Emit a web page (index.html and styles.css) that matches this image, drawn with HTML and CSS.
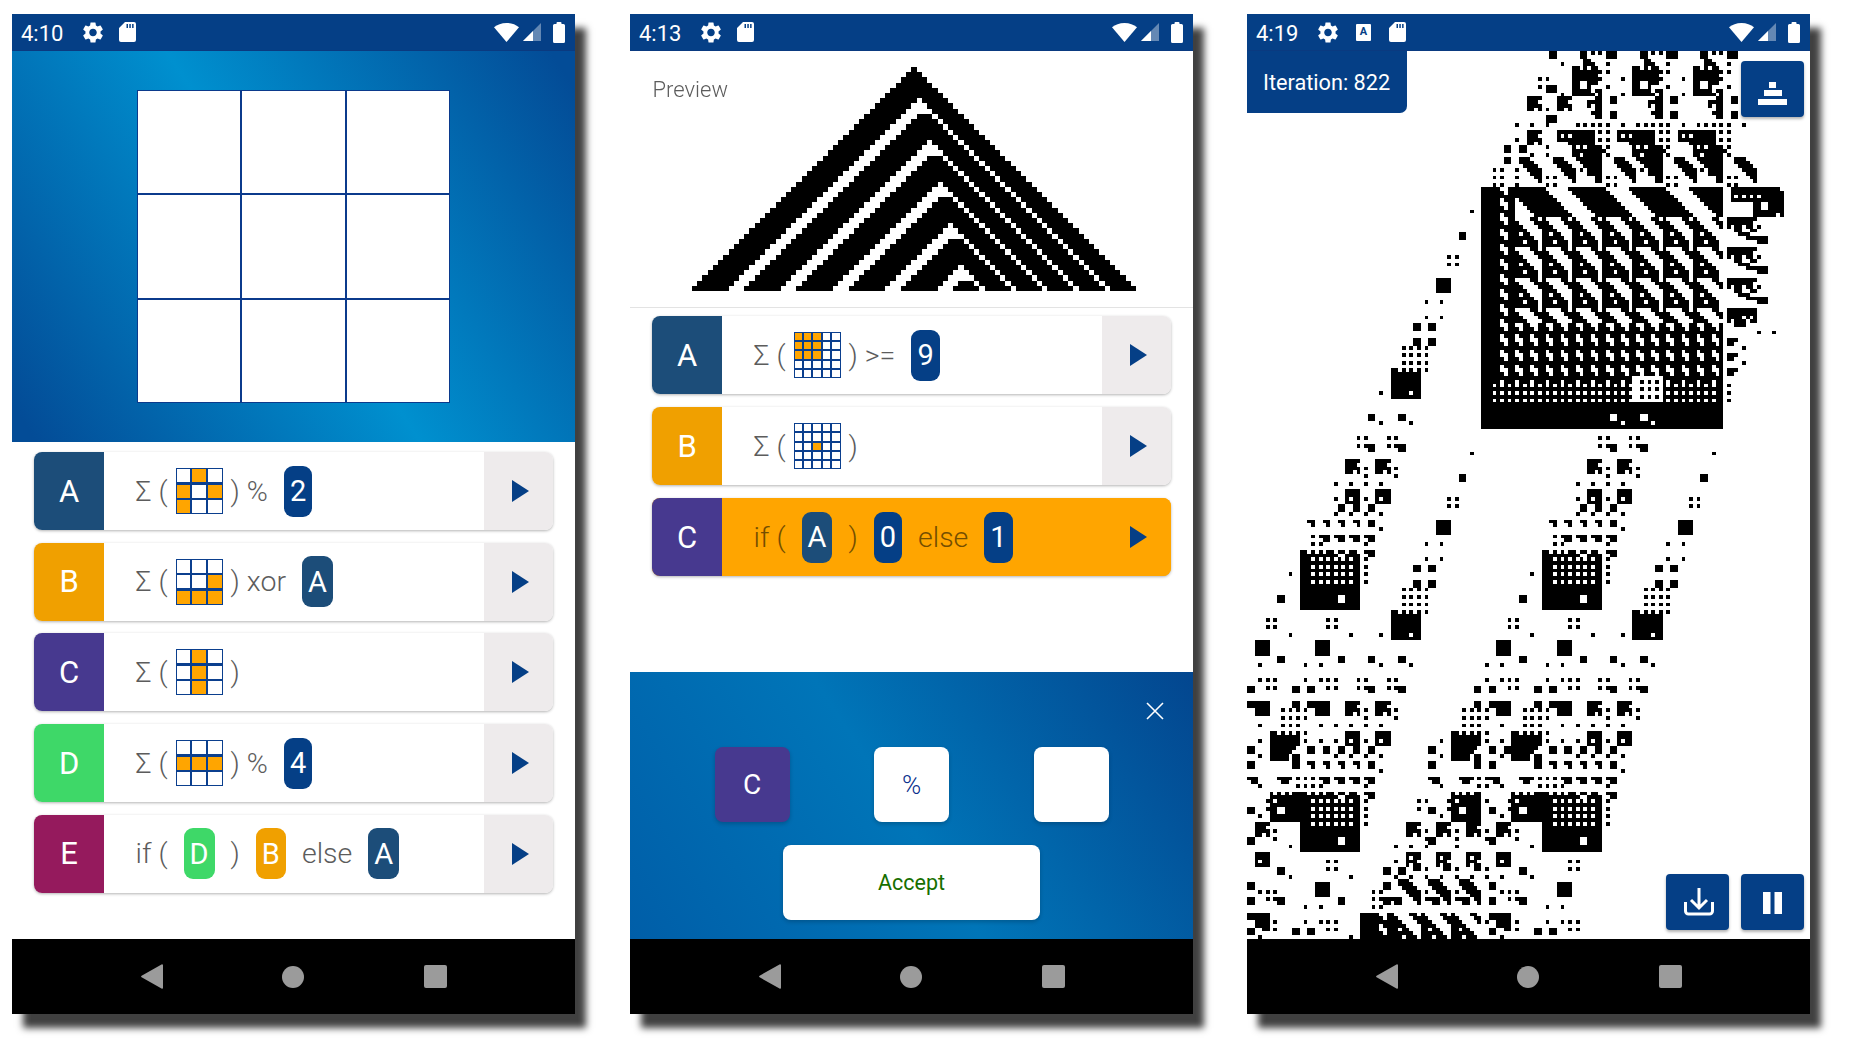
FILE: index.html
```html
<!DOCTYPE html>
<html lang="en">
<head>
<meta charset="utf-8">
<title>Automaton screens</title>
<link rel="stylesheet" href="styles.css">
</head>
<body>
<svg class="defs" aria-hidden="true">
  <symbol id="gear" viewBox="2.5 2 19 20"><path d="M19.14 12.94c.04-.3.06-.61.06-.94 0-.32-.02-.64-.07-.94l2.03-1.58a.49.49 0 0 0 .12-.61l-1.92-3.32a.488.488 0 0 0-.59-.22l-2.39.96c-.5-.38-1.03-.7-1.62-.94l-.36-2.54a.484.484 0 0 0-.48-.41h-3.84c-.24 0-.43.17-.47.41l-.36 2.54c-.59.24-1.13.57-1.62.94l-2.39-.96c-.22-.08-.47 0-.59.22L2.74 8.87c-.12.21-.08.47.12.61l2.03 1.58c-.05.3-.09.63-.09.94s.02.64.07.94l-2.03 1.58a.49.49 0 0 0-.12.61l1.92 3.32c.12.22.37.29.59.22l2.39-.96c.5.38 1.03.7 1.62.94l.36 2.54c.05.24.24.41.48.41h3.84c.24 0 .44-.17.47-.41l.36-2.54c.59-.24 1.13-.56 1.62-.94l2.39.96c.22.08.47 0 .59-.22l1.92-3.32c.12-.22.07-.47-.12-.61l-2.01-1.58zM12 15.6c-1.98 0-3.6-1.62-3.6-3.6s1.62-3.6 3.6-3.6 3.6 1.62 3.6 3.6-1.62 3.6-3.6 3.6z" fill="#fff"/></symbol>
  <symbol id="sd" viewBox="0 0 17 20"><path fill-rule="evenodd" d="M6 0H15a2 2 0 0 1 2 2V18a2 2 0 0 1-2 2H2a2 2 0 0 1-2-2V6zM7.500 2v4h1.500V2zM10.300 2v4h1.500V2zM13.100 2v4h1.500V2z" fill="#fff"/></symbol>
  <symbol id="wifi" viewBox="0 0 25 19"><path d="M12.500 19 0 4.300C3.200 1.700 7.500 0 12.500 0S21.800 1.700 25 4.300z" fill="#fff"/></symbol>
  <symbol id="signal" viewBox="0 0 18 18"><path d="M18 0V18H0z" fill="#fff" fill-opacity=".38"/><path d="M10 8V18H0z" fill="#fff"/></symbol>
  <symbol id="battery" viewBox="0 0 12 21"><path d="M3.500 2V1a1 1 0 0 1 1-1h3a1 1 0 0 1 1 1v1h2a1.500 1.500 0 0 1 1.500 1.500v16a1.500 1.500 0 0 1-1.500 1.500h-9A1.500 1.500 0 0 1 0 19.500v-16A1.500 1.500 0 0 1 1.500 2z" fill="#fff"/></symbol>
  <symbol id="play" viewBox="0 0 17 22"><path d="M0 0 17 11 0 22z" fill="#053f86"/></symbol>
</svg>

<main class="screens">

  <section class="phone">
    <header class="status">
      <span class="time">4:10</span>
      <svg class="ic-gear"><use href="#gear"/></svg>
      <svg class="ic-sd"><use href="#sd"/></svg>
      <span class="status-right">
        <svg class="ic-wifi"><use href="#wifi"/></svg>
        <svg class="ic-signal"><use href="#signal"/></svg>
        <svg class="ic-battery"><use href="#battery"/></svg>
      </span>
    </header>
    <div class="content">
      <div class="hero">
        <div class="board">
          <i></i><i></i><i></i><i></i><i></i><i></i><i></i><i></i><i></i>
        </div>
      </div>
      <div class="cards cards-first">
        <article class="card">
          <span class="letter c-a">A</span>
          <div class="formula">
            <span class="sum">Σ ( <span class="mini"><i></i><i class="on"></i><i></i><i class="on"></i><i></i><i class="on"></i><i class="on"></i><i></i><i></i></span> ) %</span>
            <span class="chip c-num">2</span>
          </div>
          <span class="run"><svg class="ic-play"><use href="#play"/></svg></span>
        </article>
        <article class="card">
          <span class="letter c-b">B</span>
          <div class="formula">
            <span class="sum">Σ ( <span class="mini"><i></i><i></i><i></i><i></i><i></i><i class="on"></i><i class="on"></i><i class="on"></i><i class="on"></i></span> ) xor</span>
            <span class="chip c-a">A</span>
          </div>
          <span class="run"><svg class="ic-play"><use href="#play"/></svg></span>
        </article>
        <article class="card">
          <span class="letter c-c">C</span>
          <div class="formula">
            <span class="sum">Σ ( <span class="mini"><i></i><i class="on"></i><i></i><i></i><i class="on"></i><i></i><i></i><i class="on"></i><i></i></span> )</span>
          </div>
          <span class="run"><svg class="ic-play"><use href="#play"/></svg></span>
        </article>
        <article class="card">
          <span class="letter c-d">D</span>
          <div class="formula">
            <span class="sum">Σ ( <span class="mini"><i></i><i></i><i></i><i class="on"></i><i class="on"></i><i class="on"></i><i></i><i></i><i></i></span> ) %</span>
            <span class="chip c-num">4</span>
          </div>
          <span class="run"><svg class="ic-play"><use href="#play"/></svg></span>
        </article>
        <article class="card">
          <span class="letter c-e">E</span>
          <div class="formula">
            <span>if (</span>
            <span class="chip c-d">D</span>
            <span>)</span>
            <span class="chip c-b">B</span>
            <span>else</span>
            <span class="chip c-a">A</span>
          </div>
          <span class="run"><svg class="ic-play"><use href="#play"/></svg></span>
        </article>
      </div>
    </div>
    <nav class="nav">
      <svg class="nav-back" viewBox="0 0 22 25"><path d="M21 .3a1 1 0 0 1 1 1V23.700a1 1 0 0 1-1.500.8L.6 13.300a1 1 0 0 1 0-1.600L20.500.4z" fill="#9b9b9b"/></svg>
      <span class="nav-home"></span>
      <span class="nav-square"></span>
    </nav>
  </section>

  <section class="phone">
    <header class="status">
      <span class="time">4:13</span>
      <svg class="ic-gear"><use href="#gear"/></svg>
      <svg class="ic-sd"><use href="#sd"/></svg>
      <span class="status-right">
        <svg class="ic-wifi"><use href="#wifi"/></svg>
        <svg class="ic-signal"><use href="#signal"/></svg>
        <svg class="ic-battery"><use href="#battery"/></svg>
      </span>
    </header>
    <div class="content">
      <div class="preview">
        <span class="preview-label">Preview</span>
        <canvas id="preview" class="preview-canvas" width="85" height="43"></canvas>
      </div>
      <div class="cards cards-second">
        <article class="card">
          <span class="letter c-a">A</span>
          <div class="formula">
            <span class="sum">Σ ( <span class="mini mini5"><i class="on"></i><i class="on"></i><i class="on"></i><i></i><i></i><i class="on"></i><i class="on"></i><i class="on"></i><i></i><i></i><i class="on"></i><i class="on"></i><i class="on"></i><i></i><i></i><i></i><i></i><i></i><i></i><i></i><i></i><i></i><i></i><i></i><i></i></span> ) &gt;=</span>
            <span class="chip c-num">9</span>
          </div>
          <span class="run"><svg class="ic-play"><use href="#play"/></svg></span>
        </article>
        <article class="card">
          <span class="letter c-b">B</span>
          <div class="formula">
            <span class="sum">Σ ( <span class="mini mini5"><i></i><i></i><i></i><i></i><i></i><i></i><i></i><i></i><i></i><i></i><i></i><i></i><i class="on"></i><i></i><i></i><i></i><i></i><i></i><i></i><i></i><i></i><i></i><i></i><i></i><i></i></span> )</span>
          </div>
          <span class="run"><svg class="ic-play"><use href="#play"/></svg></span>
        </article>
        <article class="card card-active">
          <span class="letter c-c">C</span>
          <div class="formula">
            <span>if (</span>
            <span class="chip c-a">A</span>
            <span>)</span>
            <span class="chip c-num">0</span>
            <span>else</span>
            <span class="chip c-num">1</span>
          </div>
          <span class="run"><svg class="ic-play"><use href="#play"/></svg></span>
        </article>
      </div>
      <div class="editor">
        <svg class="close" viewBox="0 0 18 18"><path d="M1 1 17 17M17 1 1 17" stroke="#fff" stroke-width="1.600" fill="none"/></svg>
        <div class="slots">
          <span class="slot slot-c">C</span>
          <span class="slot slot-op">%</span>
          <span class="slot"></span>
        </div>
        <button class="accept" type="button">Accept</button>
      </div>
    </div>
    <nav class="nav">
      <svg class="nav-back" viewBox="0 0 22 25"><path d="M21 .3a1 1 0 0 1 1 1V23.700a1 1 0 0 1-1.500.8L.6 13.300a1 1 0 0 1 0-1.600L20.500.4z" fill="#9b9b9b"/></svg>
      <span class="nav-home"></span>
      <span class="nav-square"></span>
    </nav>
  </section>

  <section class="phone">
    <header class="status">
      <span class="time">4:19</span>
      <svg class="ic-gear"><use href="#gear"/></svg>
      <span class="ic-a">A</span>
      <svg class="ic-sd ic-sd-late"><use href="#sd"/></svg>
      <span class="status-right">
        <svg class="ic-wifi"><use href="#wifi"/></svg>
        <svg class="ic-signal"><use href="#signal"/></svg>
        <svg class="ic-battery"><use href="#battery"/></svg>
      </span>
    </header>
    <div class="content field">
      <canvas id="field" class="field-canvas" width="149" height="235"></canvas>
      <div class="iteration">Iteration: 822</div>
      <button class="fab fab-tower" type="button" aria-label="Layers">
        <svg viewBox="0 0 63 56"><path d="M28 21h7v6h-7zM23 29h18v6H23zM17 38h29v6H17z" fill="#fff"/></svg>
      </button>
      <button class="fab fab-save" type="button" aria-label="Save">
        <svg viewBox="0 0 63 56"><path d="M19.500 28v9a3 3 0 0 0 3 3h21a3 3 0 0 0 3-3v-9M33 14v20M25 26l8 8 8-8" fill="none" stroke="#fff" stroke-width="3"/></svg>
      </button>
      <button class="fab fab-pause" type="button" aria-label="Pause">
        <svg viewBox="0 0 63 56"><path d="M22 18h7.500v22H22zM33.500 18H41v22h-7.500z" fill="#fff"/></svg>
      </button>
    </div>
    <nav class="nav">
      <svg class="nav-back" viewBox="0 0 22 25"><path d="M21 .3a1 1 0 0 1 1 1V23.700a1 1 0 0 1-1.500.8L.6 13.300a1 1 0 0 1 0-1.600L20.500.4z" fill="#9b9b9b"/></svg>
      <span class="nav-home"></span>
      <span class="nav-square"></span>
    </nav>
  </section>

</main>
<script src="script.js"></script>
</body>
</html>
```

FILE: styles.css
```css
* { box-sizing: border-box; }
html, body { margin: 0; height: 100%; background: #fff; overflow: hidden; }
body { font-family: Roboto, "Noto Sans", sans-serif; color: #666; }
.defs { position: absolute; width: 0; height: 0; }

.screens { display: flex; gap: 55px; padding: 14px 0 0 12px; }
.phone {
  width: 563px; height: 1000px; display: flex; flex-direction: column;
  background: #fff; box-shadow: 11px 14px 7px rgba(0,0,0,.75);
}
.phone:last-child { margin-left: -1px; }

/* status bar */
.status {
  height: 37px; flex: none; background: #053f86; color: #fff;
  display: flex; align-items: center; padding: 0 10px 0 9px;
  border-bottom: 1px solid #0a3a80;
}
.time { font-size: 22px; width: 43px; line-height: 1; position: relative; top: 2px; }
.ic-gear { width: 20px; height: 21px; margin-left: 19px; }
.ic-sd { width: 17px; height: 20px; margin-left: 16px; }
.ic-sd-late { margin-left: 18px; }
.ic-a {
  width: 15px; height: 17px; margin-left: 18px; background: #fff; color: #053f86;
  border-radius: 1px; font-size: 11px; font-weight: 700; line-height: 16px; text-align: center;
}
.status-right { margin-left: auto; display: flex; align-items: center; }
.ic-wifi { width: 25px; height: 19px; }
.ic-signal { width: 18px; height: 18px; margin-left: 4px; }
.ic-battery { width: 12px; height: 21px; margin-left: 12px; }

.content { flex: 1; display: flex; flex-direction: column; min-height: 0; }

/* nav bar */
.nav {
  height: 75px; flex: none; background: #000; display: flex;
  align-items: center; justify-content: center; gap: 119.500px;
}
.nav-back { width: 22px; height: 25px; }
.nav-home { width: 22px; height: 22px; border-radius: 50%; background: #9b9b9b; }
.nav-square { width: 23px; height: 23px; border-radius: 2px; background: #9b9b9b; }

/* hero board */
.hero {
  height: 391px; flex: none; display: flex; align-items: center; justify-content: center;
  background: linear-gradient(57deg, #034c97 3%, #0090cf 50%, #034c97 97%);
}
.board {
  width: 313px; height: 313px; display: grid; grid-template: repeat(3, 1fr) / repeat(3, 1fr);
  gap: 2px; padding: 1px; background: #0b3a8c;
}
.board i { background: #fff; }

/* rule cards */
.cards { display: flex; flex-direction: column; padding-left: 21.600px; padding-right: 22px; }
.cards-first { padding-top: 10px; gap: 12.700px; }
.cards-second { padding-top: 8px; gap: 13.200px; }
.card {
  height: 78px; display: flex; border-radius: 8px; overflow: hidden; background: #fff;
  box-shadow: 0 1px 3px rgba(0,0,0,.3);
}
.letter {
  width: 70px; flex: none; display: flex; align-items: center; justify-content: center;
  color: #fff; font-size: 31px; padding-left: 1px;
}
.c-a { background: #1c4d79; }
.c-b { background: #f0a000; }
.c-c { background: #47398f; }
.c-d { background: #3ed868; }
.c-e { background: #951a5d; }
.c-num { background: #053f86; }
.formula {
  flex: 1; display: flex; align-items: center; gap: 16px; padding-left: 32px;
  font-size: 28.500px; font-weight: 300; color: #5c5c5c;
}
.sum { display: inline-flex; align-items: center; gap: 8px; }
.chip {
  height: 51px; padding: 0 6px; border-radius: 9px; display: flex; align-items: center; justify-content: center;
  color: #fff; font-weight: 400; font-size: 29px;
}
.run { width: 69px; flex: none; background: #eeebec; display: flex; align-items: center; justify-content: center; }
.ic-play { width: 17px; height: 22px; margin-left: 3px; }
.card-active { background: #ffa500; }
.card-active .formula { color: #744e00; }
.card-active .run { background: #ffa500; }

.mini {
  width: 47px; height: 46px; display: grid; grid-template: repeat(3, 1fr) / repeat(3, 1fr);
  gap: 2.500px; padding: 1px; background: #0b3f8e;
}
.mini i { background: #fff; }
.mini i.on { background: #ffa500; }
.mini5 { grid-template: repeat(5, 1fr) / repeat(5, 1fr); gap: 2px; }

/* preview */
.preview {
  position: relative; height: 257px; flex: none; padding-top: 16px;
  display: flex; justify-content: center; border-bottom: 1px solid #e3e3e3;
}
.preview-label { position: absolute; left: 22.500px; top: 26px; font-size: 22px; font-weight: 300; color: #5c5c5c; }
.preview-canvas { width: 444px; height: 224px; margin-left: 5px; image-rendering: pixelated; }

/* bottom editor */
.editor {
  position: relative; margin-top: auto; height: 267px; flex: none; padding-top: 75px;
  display: flex; flex-direction: column; align-items: center; gap: 23px;
  background: linear-gradient(57deg, #005ea8 0%, #0075b8 48%, #03468f 100%);
}
.close { position: absolute; left: 516px; top: 30px; width: 18px; height: 18px; }
.slots { display: flex; gap: 84.500px; }
.slot {
  width: 75px; height: 75px; border-radius: 8px; background: #fff; display: flex;
  align-items: center; justify-content: center; box-shadow: 0 2px 4px rgba(0,0,0,.2);
}
.slot-c { background: #47398f; color: #fff; font-size: 28px; }
.slot-op { color: #0a2f8c; font-size: 26px; font-weight: 300; }
.accept {
  width: 257px; height: 75px; border: 0; border-radius: 8px; background: #fff;
  color: #176f00; font: 400 21.500px Roboto, sans-serif; box-shadow: 0 2px 4px rgba(0,0,0,.2);
}

/* automaton field */
.field { position: relative; overflow: hidden; }
.field-canvas { display: block; width: 563px; height: 888px; image-rendering: pixelated; }
.iteration {
  position: absolute; left: 0; top: 0; width: 160px; height: 62px; padding: 20px 0 0 16px;
  background: #053f86; color: #fff; font-size: 21.700px; font-weight: 400; line-height: 24px;
  border-bottom-right-radius: 7px;
}
.fab {
  position: absolute; width: 63px; height: 56px; border: 0; padding: 0; border-radius: 4px;
  background: #053f86; box-shadow: 0 2px 3px rgba(0,0,0,.3);
}
.fab svg { display: block; width: 63px; height: 56px; }
.fab-tower { left: 494px; top: 10px; }
.fab-save { left: 419px; top: 823px; }
.fab-pause { left: 494px; top: 823px; }
```

FILE: script.js
```js
(function () {
  /* ---------- preview triangle ---------- */
  var pc = document.getElementById('preview').getContext('2d');
  for (var r = 0; r < 43; r++) {
    for (var dx = -r; dx <= r; dx++) {
      var white = false;
      for (var k = 0; k < 5; k++) {
        var rk = 6 + 8 * k, d = 1 + 2 * k, t = r - rk;
        if (t < 0) continue;
        if (t < 3) { if (Math.abs(dx - d) <= t) white = true; }
        else if ((dx >= d - t && dx <= d - t + 2) || dx === d + t) white = true;
      }
      if (!white) pc.fillRect(dx + 42, r, 1, 1);
    }
  }

  /* ---------- automaton field ---------- */
  var c = document.getElementById('field').getContext('2d');
  c.fillStyle = '#fff'; c.fillRect(0, 0, 149, 235);
  var ox = 0, oy = 0;
  function R(x, y, w, h) { c.fillStyle = '#000'; c.fillRect(x + ox, y + oy, w, h); }
  function W(x, y, w, h) { c.fillStyle = '#fff'; c.fillRect(x + ox, y + oy, w || 1, h || 1); }
  function D(y, xs) { xs.forEach(function (x) { R(x, y, 1, 1); }); }
  function S(x, y, rows) {
    rows.forEach(function (row, j) {
      for (var i = 0; i < row.length; i++) if (row[i] === '#') R(x + i, y + j, 1, 1);
    });
  }
  function at(list, f) { list.forEach(function (o) { ox = o[0]; oy = o[1]; f(); }); ox = 0; oy = 0; }
  function pick(t, x, y) { return t[((y % t.length) + t.length) % t.length][((x % t[0].length) + t[0].length) % t[0].length] === '#'; }
  function hook(x, y) { R(x, y, 3, 1); R(x + 1, y + 1, 2, 1); }

  var N4 = ['####', '###.', '####', '##.#'];
  var FLAG = ['######', '######', '..####', '..####'];
  var TRI = ['###...', '####..', '.####.', '..####', '...###', '....##', '.....#'];
  var FF = ['####', '#.##', '###.', '#.##', '..##'];
  var A8 = ['##.#.##.', '########', '#######.', '########', '##..###.', '##..#...', '#####.##', '######.#'];
  var C12 = ['#########...', '#.#.######..', '#########...', '...#######..', '....#.#.####', '....#########', '....##.#####', '.....#######', '......######', '.......#####'];
  var K8 = ['##.#.#.#', '########', '########', '########', '#######.', '######..', '#####.##', '#####.##'];
  var K2 = ['#.#.#.##', '########', '#.######', '########', '##..####', '##..####', '########', '########'];
  var T8 = ['....##.#', '#....###', '##....##', '###....#', '#.##...#', '#####..#', '##.###.#', '######.#'];
  var T4 = ['..##', '#.##', '####', '.###'];
  var WW = ['#############.', '##############', '#.#.#.#.######', '##############', '......##..####', '......##..####', '......########', '......######.#'];
  var V8 = ['########', '#######.', '#.##.##.', '..##..##', '...###..', '.....###'];

  /* textured block: cells start black, white cells punched out */
  function texture(x0, y0, w, h, big) {
    R(x0, y0, w, h);
    for (var y = y0; y < y0 + h; y++) {
      for (var x = x0 + 3; x < x0 + w; x++) {
        var rel = y - y0, white = false, tx = x - x0 - 9, v = rel % 8;
        if (rel >= 52) {
          white = (x - x0) % 2 === 1 && rel % 2 === 0 && rel < 58 && x < x0 + 62;
        } else if (x < x0 + 9) {
          white = !pick(T4, x - x0 - 1, rel);
        } else if (big && rel < 8) {
          var u = ((tx - 8) % 16 + 16) % 16;
          white = u >= v && u <= v + 5;
        } else if (rel < 36) {
          white = !pick(T8, tx, rel);
        } else {
          white = !pick(T4, tx, rel);
        }
        if (white) W(x, y);
      }
    }
  }

  /* strand running up and to the right */
  function strand() {
    D(106, [59]);
    R(56, 112, 2, 2);
    D(118, [53, 55]); D(120, [53, 55]);
    R(50, 124, 4, 4);
    D(130, [47, 51]); D(134, [47, 51]);
    R(44, 136, 2, 2); R(48, 136, 2, 2);
    R(44, 140, 2, 2); R(48, 140, 2, 2);
    D(142, [41, 43, 45, 47]); D(144, [41, 43, 45, 47]); D(146, [41, 43, 45, 47]); D(148, [47]);
    R(38, 148, 8, 8); W(40, 148); W(42, 148); W(44, 148); W(43, 154);
  }

  /* tower with the large dotted square at its foot (coordinates of the lower copy) */
  function tower() {
    [29, 37].forEach(function (x) {
      D(166, [x, x + 2]); D(168, [x]); R(x + 2, 168, 3, 1); R(x + 3, 169, 2, 1);
    });
    S(26, 172, N4); S(34, 172, N4);
    D(174, [31, 39]); D(176, [31, 39]);
    D(178, [23, 27, 31, 35]);
    R(26, 180, 4, 4); W(27, 182); R(34, 180, 4, 4); W(35, 182);
    D(182, [23, 31]);
    R(24, 184, 2, 2); R(28, 184, 2, 2); R(32, 184, 2, 2);
    D(186, [23, 27, 31, 35]);
    [16, 20, 24, 28].forEach(function (x) { S(x, 188, ['##', '.#']); });
    R(32, 188, 2, 2); D(190, [35]);
    [19, 23, 27, 31].forEach(function (x) { hook(x, 192); });
    D(192, [17]); D(194, [17, 19, 31]);
    R(14, 196, 16, 16);
    [16, 18, 20, 23, 26, 29].forEach(function (x) { W(x, 196); });
    W(24, 197, 2, 1);
    [198, 200, 202, 204].forEach(function (y) {
      [17, 19, 21, 23, 25, 27].forEach(function (x) { W(x, y); });
    });
    W(24, 208, 2, 2);
    hook(31, 196);
    D(198, [31]); D(200, [31]); D(202, [31]); D(204, [31]);
  }

  function midRow() {
    D(150, [5, 7, 21, 23]); D(152, [5, 7, 21, 23]);
    D(154, [11, 27, 35]);
    R(2, 156, 4, 4); R(18, 156, 4, 4);
    R(8, 160, 2, 2); R(24, 160, 2, 2); R(32, 160, 2, 2); R(40, 160, 2, 2);
    D(162, [-1, 3, 15, 19, 35, 43]);
  }

  function gRow() {
    D(166, [-1, 3, 5, 7, 15, 19, 21, 23]);
    D(168, [5, 7, 21, 23]);
    R(-4, 168, 2, 2); R(0, 168, 2, 2); R(12, 168, 2, 2); R(16, 168, 2, 2);
  }

  function cluster() {
    D(174, [9, 11, 13, 15]); D(176, [9, 11, 13, 15]); D(178, [9, 11, 13]);
    R(12, 172, 2, 2);
    S(6, 180, K8); R(12, 188, 2, 2);
    D(180, [15]); D(182, [3, 15, 19]);
    R(0, 184, 2, 2); R(16, 184, 2, 2); R(20, 184, 2, 2);
    D(186, [3]);
    R(0, 188, 2, 2);
    R(0, 192, 3, 1); R(1, 193, 2, 1); D(194, [3]);
    hook(8, 192);
    D(192, [11, 13, 15]); D(194, [13, 15]);
    S(6, 196, K2); D(198, [5]); D(200, [5]);
    D(198, [-3, -1]); D(200, [-3]); R(0, 200, 2, 2); D(202, [3]);
    S(2, 204, N4); R(0, 208, 2, 2); D(206, [7]); D(208, [7]);
  }

  /* base scene */
  at([[0, -64], [0, 0], [64, 0]], strand);
  at([[0, -64], [64, -64], [0, 0], [64, 0]], tower);
  R(32, 96, 2, 2); R(40, 96, 2, 2); D(98, [35, 43]); D(90, [35]);
  at([[0, 0], [64, 0]], function () { D(138, [11]); R(8, 144, 2, 2); });
  at([[0, 0], [64, 0]], midRow);
  at([[0, 0], [64, 0], [0, 64], [64, 64]], gRow);
  at([[0, 0], [64, 0]], function () {
    S(0, 172, FLAG); S(16, 172, FLAG);
    D(178, [3, 19]);
    S(2, 212, ['####', '####', '#.##', '####']);
    R(8, 216, 2, 2);
    D(218, [11]); D(210, [11]);
    R(18, 220, 4, 4); R(0, 220, 2, 2); R(0, 224, 2, 2);
    D(222, [3, 5, 7]); D(224, [5]); hook(7, 224);
    D(226, [15, 19]);
    S(0, 228, ['######', '######', '..####', '..####', '....##']);
    D(230, [7]); D(232, [7]); D(234, [3]);
    D(214, [21, 23]); D(216, [21, 23]);
  });
  at([[0, 0], [48, 0], [64, 0]], cluster);
  at([[40, 0], [56, 0]], function () { S(2, 204, N4); D(206, [7]); D(208, [7]); });

  D(210, [39, 43, 47, 55]);
  [42, 50, 58].forEach(function (x) { S(x, 212, FF); });
  R(36, 216, 2, 2); R(40, 216, 2, 2);
  D(214, [39]); D(216, [47, 55, 63]);
  D(218, [27, 39, 43, 47, 51, 55, 59, 63, 67]);
  [40, 48, 56].forEach(function (x) { S(x, 219, TRI); });
  R(36, 220, 2, 2); R(24, 224, 2, 2);
  D(222, [33, 35]); D(224, [33]); hook(35, 224); D(226, [33, 35]);
  hook(38, 224); hook(48, 224); hook(56, 224);
  D(222, [47, 55]); D(224, [47, 55]);
  D(234, [27]);
  texture(30, 228, 32, 7, false);

  /* big square */
  texture(62, 36, 64, 64, true);
  R(62, 94, 64, 6);
  W(96, 96, 2, 2); W(104, 96, 2, 2); W(99, 98); W(107, 98);
  W(102, 86, 8, 7);
  [104, 106, 108].forEach(function (x) { R(x, 87, 1, 1); R(x, 89, 1, 1); R(x, 91, 1, 1); });

  /* right fringe of the square */
  S(128, 36, WW);
  [44, 52, 60].forEach(function (y) {
    S(127, y, V8);
    R(135, y + 5, 3, 2); D(y + 2, [135]);
  });
  S(127, 68, ['########', '########', '####.#.#', '#.###.##', '..###...']);
  [76, 80, 84].forEach(function (y) { R(127, y, 3, 1); R(127, y + 1, 2, 1); });
  D(78, [131]); D(82, [131]);
  D(88, [127]); D(90, [127]); D(92, [127]);
  D(74, [135, 139]); D(66, [135]);

  /* top rows, period 16 */
  [0, 16, 32].forEach(function (k) {
    ox = k; oy = 0;
    R(88, 0, 2, 2); R(89, 2, 2, 2);
    D(0, [91, 93]); D(3, [91, 95]);
    R(95, 0, 3, 2);
    D(5, [95]); D(9, [95]); D(7, [99]); D(11, [99]);
    S(86, 4, A8);
    R(96, 12, 2, 2); R(96, 16, 2, 2);
    S(90, 12, ['..##', '####', '#.##', '..##', '.###', '..##']);
    D(19, [87, 89, 91, 93, 95, 99]);
    D(21, [91, 93, 95]); D(23, [91, 93, 95]);
    D(25, [95]); D(27, [95]);
    S(82, 21, C12);
    S(81, 28, TRI);
    S(97, 28, TRI);
    R(90, 31, 4, 2); R(92, 33, 2, 2);
    D(31, [88]); D(33, [95, 97]); D(35, [95, 97]);
  });
  ox = 0; oy = 0;
  R(80, 0, 2, 2); D(3, [83]);
  D(7, [77, 79]); D(9, [77]); R(79, 9, 3, 2); D(11, [83]);
  S(74, 12, N4); S(82, 12, N4);
  D(15, [79]); R(79, 17, 3, 2);
  D(19, [71, 75, 79]);
  S(74, 21, N4);
  D(23, [71]); R(68, 25, 2, 2); R(72, 25, 2, 2);
  D(25, [79]); D(27, [75, 79]);
  S(72, 28, TRI); R(68, 28, 2, 2);
  D(33, [79, 81]); D(35, [79, 81]);
  D(31, [65, 67, 71]); D(33, [65, 67, 71]); D(35, [65, 67, 71]);
})();
```
